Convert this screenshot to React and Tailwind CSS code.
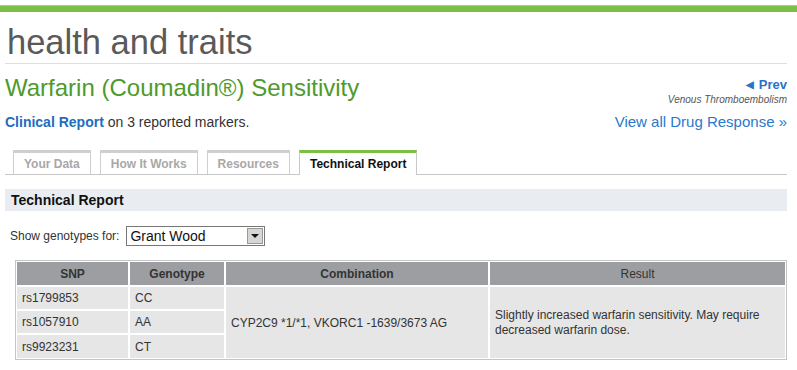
import React from 'react';

const tabs = [
  { label: 'Your Data', active: false },
  { label: 'How It Works', active: false },
  { label: 'Resources', active: false },
  { label: 'Technical Report', active: true },
];

const rows = [
  { snp: 'rs1799853', genotype: 'CC' },
  { snp: 'rs1057910', genotype: 'AA' },
  { snp: 'rs9923231', genotype: 'CT' },
];

const App = () => {
  return (
    <div className="w-[797px] h-[370px] bg-white overflow-hidden font-['Liberation_Sans',Arial,sans-serif]">
      {/* barre verte */}
      <div className="mt-[5px] h-[7px] bg-[#7dbf45] border-t border-[#a9cf8a]" />

      <div className="pl-[5px] pr-[10px]">
        <h1 className="mt-[10px] h-[42px] pl-[2px] text-[34.5px] leading-[40px] text-[#5a5a5a] border-b border-[#dedede]">
          health and traits
        </h1>

        <div className="flex justify-between mt-[10px]">
          <h2 className="text-[24px] leading-[28px] text-[#4e9a2c]">
            Warfarin (Coumadin®) Sensitivity
          </h2>
          <div className="flex flex-col items-end pt-[3px]">
            <a className="flex items-center gap-[5px] text-[13px] leading-[16px] font-bold text-[#2a72c4]">
              <span className="text-[10px]">◀</span>Prev
            </a>
            <span className="text-[10px] leading-[14px] italic text-[#555]">Venous Thromboembolism</span>
          </div>
        </div>

        <div className="flex justify-between items-end mt-[6px]">
          <p className="text-[14px] leading-[18px] text-[#333]">
            <span className="font-bold text-[#1f6dc0]">Clinical Report</span> on 3 reported markers.
          </p>
          <a className="text-[15px] leading-[18px] text-[#2a78cc]">View all Drug Response »</a>
        </div>

        {/* onglets */}
        <div className="mt-[19px] flex items-end gap-[9px] pl-[8px] border-b border-[#c8c8c8] h-[25px]">
          {tabs.map(tab => (
            <div
              key={tab.label}
              className={`h-[25px] -mb-px px-[10px] flex items-center text-[12px] font-bold border-x ${
                tab.active
                  ? 'bg-white text-[#111] border-t-[3px] border-t-[#7dbf45] border-x-[#c8c8c8] pb-[1px]'
                  : 'bg-white text-[#a8a8a8] border-t-[3px] border-t-[#cfcfcf] border-x-[#cfcfcf] border-b border-b-[#c8c8c8]'
              }`}
            >
              {tab.label}
            </div>
          ))}
        </div>

        <div className="mt-[14px] h-[22px] bg-[#e9edf2] flex items-center pl-[6px] text-[14px] font-bold text-[#111]">
          Technical Report
        </div>

        <div className="mt-[15px] flex items-center pl-[5px] text-[12px] text-[#333]">
          <span className="mr-[7px]">Show genotypes for:</span>
          <div className="w-[139px] h-[20px] border border-[#777] flex items-center justify-between bg-white">
            <span className="pl-[3px] text-[14px] text-[#111]">Grant Wood</span>
            <div className="w-[16px] h-[16px] mr-[1px] bg-[#d8d6d2] border border-[#999] flex items-center justify-center">
              <div className="w-0 h-0 border-l-[4px] border-r-[4px] border-t-[4px] border-l-transparent border-r-transparent border-t-[#111]" />
            </div>
          </div>
        </div>

        {/* tableau */}
        <div className="mt-[14px] ml-[10px] border border-[#c4c4c4] p-px">
          <table className="w-full border-collapse text-[12px] text-[#333]">
            <thead>
              <tr className="h-[24px] bg-[#9c9ea1]">
                <th className="w-[112px] border-r-2 border-white font-bold">SNP</th>
                <th className="w-[96px] border-r-2 border-white font-bold">Genotype</th>
                <th className="w-[264px] border-r-2 border-white font-bold">Combination</th>
                <th className="font-normal">Result</th>
              </tr>
            </thead>
            <tbody>
              {rows.map((row, i) => (
                <tr key={row.snp} className="h-[24px] bg-[#e6e6e6]">
                  <td className="border-r-2 border-t-2 border-white pl-[5px]">{row.snp}</td>
                  <td className="border-r-2 border-t-2 border-white pl-[5px]">{row.genotype}</td>
                  {i === 0 && (
                    <>
                      <td rowSpan={3} className="border-r-2 border-t-2 border-white pl-[5px]">
                        CYP2C9 *1/*1, VKORC1 -1639/3673 AG
                      </td>
                      <td rowSpan={3} className="border-t-2 border-white pl-[5px] pr-[20px] leading-[15px]">
                        Slightly increased warfarin sensitivity. May require decreased warfarin dose.
                      </td>
                    </>
                  )}
                </tr>
              ))}
            </tbody>
          </table>
        </div>
      </div>
    </div>
  );
};

export default App;
